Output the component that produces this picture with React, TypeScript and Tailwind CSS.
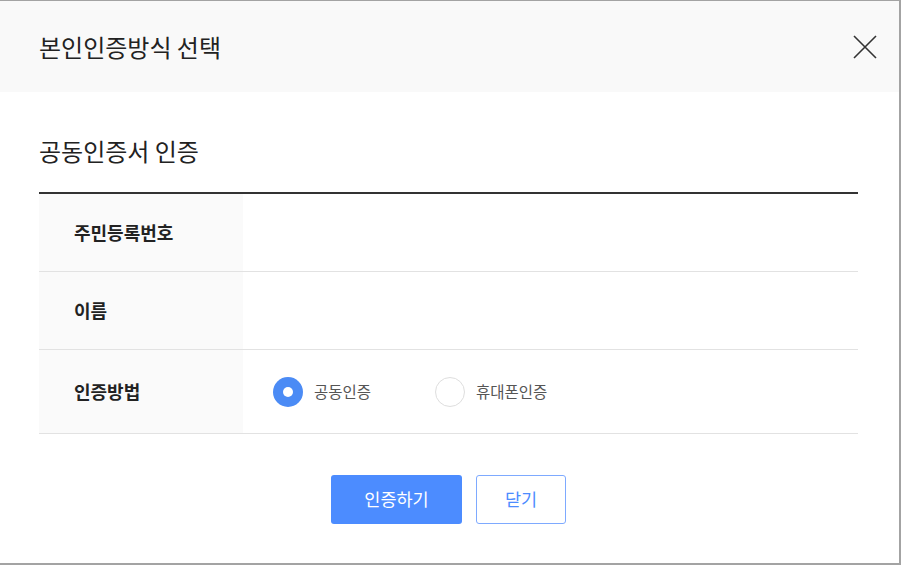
import { useState } from "react";

const font = { fontFamily: '"Noto Sans CJK KR", "Noto Sans", sans-serif' };

function Radio({ checked, label, onClick }: { checked: boolean; label: string; onClick: () => void }) {
  return (
    <button type="button" onClick={onClick} className="flex items-center gap-[11px]">
      {checked ? (
        <span className="flex h-[30px] w-[30px] items-center justify-center rounded-full bg-[#4b8bf5]">
          <span className="h-[10px] w-[10px] rounded-full bg-white" />
        </span>
      ) : (
        <span className="h-[30px] w-[30px] rounded-full border border-[#dedede] bg-white" />
      )}
      <span className="text-[15.5px] text-[#555]">{label}</span>
    </button>
  );
}

export default function App() {
  const [method, setMethod] = useState("cert");

  const rows = [
    { label: "주민등록번호", h: "h-[78px]" },
    { label: "이름", h: "h-[78px]" },
  ];

  return (
    <div
      style={font}
      className="flex h-[565px] w-[901px] flex-col border-t border-r-2 border-b-2 border-[#a3a3a3] bg-white text-[#222]"
    >
      {/* Header */}
      <div className="flex h-[91px] shrink-0 items-center justify-between bg-[#f9f9f9] pl-[39px] pr-[22px]">
        <h1 className="text-[24px] font-normal leading-none">본인인증방식 선택</h1>
        <button type="button" className="flex h-[24px] w-[24px] items-center justify-center">
          <svg width="24" height="24" viewBox="0 0 24 24" fill="none" stroke="#333" strokeWidth="1.6">
            <path d="M1 1 L23 23 M23 1 L1 23" />
          </svg>
        </button>
      </div>

      {/* Body */}
      <div className="flex flex-col px-[39px] pr-[41px]">
        <h2 className="mt-[47px] text-[24px] font-normal leading-none">공동인증서 인증</h2>

        <div className="mt-[29px] border-t-2 border-[#333]">
          {rows.map((r) => (
            <div key={r.label} className={`flex ${r.h} border-b border-[#e2e2e2]`}>
              <div className="flex w-[204px] items-center bg-[#fafafa] pl-[35px] text-[18px] font-bold">
                {r.label}
              </div>
              <div className="flex-1" />
            </div>
          ))}
          <div className="flex h-[84px] border-b border-[#e2e2e2]">
            <div className="flex w-[204px] items-center bg-[#fafafa] pl-[35px] text-[18px] font-bold">
              인증방법
            </div>
            <div className="flex flex-1 items-center gap-[64px] pl-[30px]">
              <Radio checked={method === "cert"} label="공동인증" onClick={() => setMethod("cert")} />
              <Radio checked={method === "phone"} label="휴대폰인증" onClick={() => setMethod("phone")} />
            </div>
          </div>
        </div>

        <div className="mt-[41px] flex justify-center gap-[14px]">
          <button
            type="button"
            className="h-[49px] w-[131px] rounded-[3px] bg-[#4c8cff] text-[17.5px] text-white"
          >
            인증하기
          </button>
          <button
            type="button"
            className="h-[49px] w-[90px] rounded-[3px] border border-[#7eaaff] bg-white text-[17.5px] text-[#4c8cff]"
          >
            닫기
          </button>
        </div>
      </div>
    </div>
  );
}
